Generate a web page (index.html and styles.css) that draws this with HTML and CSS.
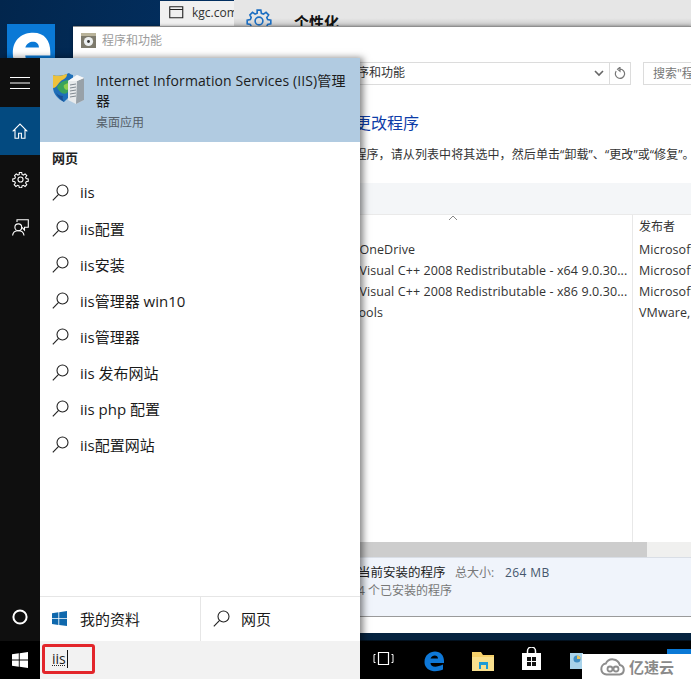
FILE: index.html
```html
<!DOCTYPE html>
<html lang="zh">
<head>
<meta charset="utf-8">
<title>iis</title>
<link rel="stylesheet" href="styles.css">
</head>
<body>
<div class="desktop">
  <div class="win-tab">
    <svg class="tab-icon" width="15" height="13" viewBox="0 0 15 13"><path d="M.75.75h13v11h-13zM.75 3.5h13" fill="none" stroke="#222" stroke-width="1.1"/></svg>
    <span>kgc.com</span>
  </div>
  <div class="win-settings">
    <svg class="gear-blue" width="26" height="26" viewBox="0 0 24 24"><path d="M10.3 2h3.4l.5 2.900 1.900.8 2.400-1.700 2.400 2.400-1.700 2.400.8 1.900 2.900.5v3.400l-2.900.5-.8 1.900 1.700 2.400-2.400 2.400-2.400-1.700-1.900.8-.5 2.900h-3.400l-.5-2.900-1.900-.8-2.400 1.700-2.400-2.400 1.700-2.400-.8-1.900-2.900-.5v-3.400l2.900-.5.8-1.900L3.600 6.400 6 4l2.400 1.700 1.900-.8z" fill="none" stroke="#1b6ec2" stroke-width="1.500"/><circle cx="12" cy="12" r="3.600" fill="none" stroke="#1b6ec2" stroke-width="1.500"/></svg>
    <b>个性化</b>
  </div>
  <div class="edge-tile">
    <svg width="50" height="50" viewBox="0 0 44 44"><path d="M6 24C6 11 15 6 24 6c10 0 15 7 15 17v3H17c0 7 10 9 21 3v9c-6 3-12 4-18 3C10 39 6 32 6 24zm11-5h12c0-7-10-7-12 0z" fill="#fff"/></svg>
  </div>

  <div class="win-cp">
    <div class="cp-title">
      <svg width="15" height="15" viewBox="0 0 15 15"><rect width="15" height="15" fill="#7d7a6c"/><rect width="15" height="3" fill="#b9b39a"/><circle cx="7.500" cy="8.500" r="4.600" fill="#eceff0"/><circle cx="7.500" cy="8.500" r="1.400" fill="#333"/></svg>
      <span>程序和功能</span>
    </div>
    <div class="cp-nav">
      <div class="addr">
        <span class="addr-text">程序和功能</span>
        <svg class="chev" width="10" height="7" viewBox="0 0 10 7"><path d="M1 1l4 4 4-4" fill="none" stroke="#666" stroke-width="1.600"/></svg>
        <span class="addr-refresh"><svg width="12" height="13" viewBox="0 0 12 13"><path d="M6 2.200a4.600 4.600 0 1 1-3.800 2M6 .2v4L3.600 2.200z" fill="none" stroke="#777" stroke-width="1.200"/></svg></span>
      </div>
      <div class="search">搜索"程序和功能"</div>
    </div>
    <h1 class="cp-h">卸载或更改程序</h1>
    <p class="cp-p">若要卸载程序，请从列表中将其选中，然后单击“卸载”、“更改”或“修复”。</p>
    <div class="toolbar"></div>
    <div class="table">
      <div class="col-name">
        <svg class="sort" width="10" height="6" viewBox="0 0 10 6"><path d="M1 5l4-4 4 4" fill="none" stroke="#888"/></svg>
        <div class="head">名称</div>
        <div class="cell">Microsoft OneDrive</div>
        <div class="cell">Microsoft Visual C++ 2008 Redistributable - x64 9.0.30...</div>
        <div class="cell">Microsoft Visual C++ 2008 Redistributable - x86 9.0.30...</div>
        <div class="cell">VMware Tools</div>
      </div>
      <div class="col-pub">
        <div class="head">发布者</div>
        <div class="cell">Microsoft Corporation</div>
        <div class="cell">Microsoft Corporation</div>
        <div class="cell">Microsoft Corporation</div>
        <div class="cell">VMware, Inc.</div>
      </div>
    </div>
    <div class="hscroll"><div class="hthumb"></div></div>
    <div class="summary">
      <div class="sum-1"><span class="sum-a">当前安装的程序</span><span class="sum-b">总大小:</span><span class="sum-c">264 MB</span></div>
      <div class="sum-2">4 个已安装的程序</div>
    </div>
  </div>

  <div class="taskbar">
    <svg class="tb-view" width="21" height="15" viewBox="0 0 21 15"><path d="M5.500 1.500h10v12h-10z" fill="none" stroke="#fff" stroke-width="1.200"/><path d="M2.500 3.500H1v8h1.500M18.500 3.500H20v8h-1.500" fill="none" stroke="#fff"/></svg>
    <svg class="tb-edge" width="22" height="22" viewBox="0 0 44 44"><path d="M3 24C3 10 14 3 24 3c11 0 18 8 18 19v4H15c0 8 11 10 25 3v10c-7 3-14 4-21 3C9 40 3 33 3 24zm12-7h15c0-8-12-8-15 0z" fill="#0e78d8"/></svg>
    <svg class="tb-folder" width="22" height="20" viewBox="0 0 22 20"><path d="M0 1h9l2 3h11v16H0z" fill="#f5d06a"/><path d="M0 6h22v14H0z" fill="#f9e08e"/><rect x="7" y="11" width="9" height="7" fill="#1e9bd7"/><rect x="9" y="14" width="5" height="4" fill="#f9e08e"/></svg>
    <svg class="tb-store" width="21" height="24" viewBox="0 0 21 24"><path d="M6.500 6V4a4 4 0 0 1 8 0v2" fill="none" stroke="#fff" stroke-width="1.500"/><path d="M1 6h19v17H1z" fill="#fff"/><path d="M6 10h4v4H6zM11 10h4v4h-4zM6 15h4v4H6zM11 15h4v4h-4z" fill="#111"/></svg>
    <svg class="tb-app" width="13" height="16" viewBox="0 0 13 16"><rect width="13" height="16" fill="#a9d3ea"/><circle cx="7" cy="6" r="3.500" fill="#3f8dc2"/><path d="M7 6V2.500A3.500 3.500 0 0 1 10.500 6z" fill="#e9c35a"/></svg>
    <div class="tb-blue"></div>
  </div>
  <div class="watermark">
    <svg width="26" height="19" viewBox="0 0 26 19"><path d="M6.500 17.500a5.500 5.500 0 0 1-.7-10.900 7.500 7.500 0 0 1 14 1.400 4.800 4.800 0 0 1-.3 9.500z" fill="none" stroke="#8d8d8d" stroke-width="2"/><circle cx="10" cy="12" r="2.500" fill="none" stroke="#8d8d8d" stroke-width="1.800"/><circle cx="16" cy="12" r="2.500" fill="none" stroke="#8d8d8d" stroke-width="1.800"/></svg>
    <span>亿速云</span>
  </div>

  <div class="start">
    <div class="rail">
      <div class="rail-top">
        <div class="rail-btn burger">
          <svg width="20" height="14" viewBox="0 0 20 14"><path d="M0 1.500h20M0 7h20M0 12.500h20" stroke="#fff" stroke-width="1.100"/></svg>
        </div>
        <div class="rail-btn home">
          <svg width="16" height="16" viewBox="0 0 16 16"><path d="M.7 8.300L8 1l7.300 7.300M3 6.500v8.800h3.600v-5h2.800v5H13V6.500" fill="none" stroke="#fff" stroke-width="1.100"/></svg>
        </div>
        <div class="rail-btn">
          <svg width="17" height="17" viewBox="0 0 24 24"><path d="M10.300 2h3.400l.5 2.900 1.900.8 2.400-1.700 2.400 2.400-1.700 2.400.8 1.900 2.900.5v3.400l-2.900.5-.8 1.900 1.700 2.400-2.400 2.400-2.400-1.700-1.900.8-.5 2.900h-3.400l-.5-2.900-1.900-.8-2.400 1.700-2.400-2.400 1.700-2.400-.8-1.900-2.900-.5v-3.400l2.900-.5.8-1.900L3.600 6.400 6 4l2.400 1.700 1.900-.8z" fill="none" stroke="#fff" stroke-width="1.500"/><circle cx="12" cy="12" r="3.600" fill="none" stroke="#fff" stroke-width="1.500"/></svg>
        </div>
        <div class="rail-btn">
          <svg width="17" height="17" viewBox="0 0 17 17"><path d="M5 3V.8h11.300v7.500h-3.800v2.700L10 8.300" fill="none" stroke="#fff" stroke-width="1.100"/><circle cx="6.300" cy="8.300" r="3.400" fill="none" stroke="#fff" stroke-width="1.100"/><path d="M.6 16.500c.3-3.500 2.500-4.800 5.700-4.800s5.400 1.300 5.700 4.800" fill="none" stroke="#fff" stroke-width="1.100"/></svg>
        </div>
      </div>
      <div class="rail-btn cortana">
        <svg width="16" height="16" viewBox="0 0 16 16"><circle cx="8" cy="8" r="6.600" fill="none" stroke="#fff" stroke-width="2"/></svg>
      </div>
      <div class="rail-btn winbtn">
        <svg width="16" height="16" viewBox="0 0 16 16"><path d="M0 2.300l6.800-1v6.300H0zM7.700 1.200L16 0v7.600H7.700zM0 8.500h6.800v6.300l-6.800-1zM7.700 8.500H16V16l-8.300-1.200z" fill="#fff"/></svg>
      </div>
    </div>
    <div class="panel">
      <div class="best">
        <svg class="best-icon" width="33" height="33" viewBox="0 0 33 33">
          <path d="M1 3c6 2 12 0 16-2 1 1 3 2 4 2v12c0 7-5 11-9 15C6 27 1 22 1 15z" fill="#1f6fb8"/>
          <path d="M1 3c6 2 10 0 14-1 0 5-5 5-8 9-2 3-4 5-6 5z" fill="#eec23b"/>
          <path d="M5 15c3-5 9-8 15-6 1 5-2 8-5 12-4 2-8-1-10-6z" fill="#3aa35c"/>
          <path d="M12 13c3-2 5-2 7-1 0 3-2 5-4 6-2 0-4-3-3-5z" fill="#8fce4d"/>
          <path d="M4 21c2 2 4 3 7 3-1 2 0 4 1 6-3-2-6-5-8-9z" fill="#1b4f94"/>
          <path d="M16 9l9-6 7 3v22l-8 4-8-4z" fill="#e7eaec"/>
          <path d="M25 9l7-3v22l-8 4z" fill="#98a1a8"/>
          <path d="M16 9l9-6 7 3-7 3z" fill="#f7f8f9"/>
          <path d="M18 13l6-1M18 16l6-1M18 19l6-1M18 22l6-1M18 25l6-1" stroke="#7f8890"/>
        </svg>
        <div class="best-text">
          <div class="best-title">Internet Information Services (IIS)管理器</div>
          <div class="best-sub">桌面应用</div>
        </div>
      </div>
      <div class="section">网页</div>
      <ul class="results">
        <li><svg class="mag" width="17" height="17" viewBox="0 0 17 17"><circle cx="10.500" cy="6.500" r="5.500" fill="none" stroke="#222" stroke-width="1.100"/><path d="M6.600 10.400L.8 16.300" stroke="#222" stroke-width="1.100"/></svg><span>iis</span></li>
        <li><svg class="mag" width="17" height="17" viewBox="0 0 17 17"><circle cx="10.500" cy="6.500" r="5.500" fill="none" stroke="#222" stroke-width="1.100"/><path d="M6.600 10.400L.8 16.300" stroke="#222" stroke-width="1.100"/></svg><span>iis配置</span></li>
        <li><svg class="mag" width="17" height="17" viewBox="0 0 17 17"><circle cx="10.500" cy="6.500" r="5.500" fill="none" stroke="#222" stroke-width="1.100"/><path d="M6.600 10.400L.8 16.300" stroke="#222" stroke-width="1.100"/></svg><span>iis安装</span></li>
        <li><svg class="mag" width="17" height="17" viewBox="0 0 17 17"><circle cx="10.500" cy="6.500" r="5.500" fill="none" stroke="#222" stroke-width="1.100"/><path d="M6.600 10.400L.8 16.300" stroke="#222" stroke-width="1.100"/></svg><span>iis管理器 win10</span></li>
        <li><svg class="mag" width="17" height="17" viewBox="0 0 17 17"><circle cx="10.500" cy="6.500" r="5.500" fill="none" stroke="#222" stroke-width="1.100"/><path d="M6.600 10.400L.8 16.300" stroke="#222" stroke-width="1.100"/></svg><span>iis管理器</span></li>
        <li><svg class="mag" width="17" height="17" viewBox="0 0 17 17"><circle cx="10.500" cy="6.500" r="5.500" fill="none" stroke="#222" stroke-width="1.100"/><path d="M6.600 10.400L.8 16.300" stroke="#222" stroke-width="1.100"/></svg><span>iis 发布网站</span></li>
        <li><svg class="mag" width="17" height="17" viewBox="0 0 17 17"><circle cx="10.500" cy="6.500" r="5.500" fill="none" stroke="#222" stroke-width="1.100"/><path d="M6.600 10.400L.8 16.300" stroke="#222" stroke-width="1.100"/></svg><span>iis php 配置</span></li>
        <li><svg class="mag" width="17" height="17" viewBox="0 0 17 17"><circle cx="10.500" cy="6.500" r="5.500" fill="none" stroke="#222" stroke-width="1.100"/><path d="M6.600 10.400L.8 16.300" stroke="#222" stroke-width="1.100"/></svg><span>iis配置网站</span></li>
      </ul>
      <div class="scopes">
        <div class="scope mine">
          <svg width="15" height="15" viewBox="0 0 16 16"><path d="M0 2.300l6.800-1v6.300H0zM7.700 1.200L16 0v7.600H7.700zM0 8.500h6.800v6.300l-6.800-1zM7.700 8.500H16V16l-8.300-1.200z" fill="#0f68ad"/></svg>
          <span>我的资料</span>
        </div>
        <div class="scope web">
          <svg width="17" height="17" viewBox="0 0 17 17"><circle cx="10.500" cy="6.500" r="5.500" fill="none" stroke="#222" stroke-width="1.100"/><path d="M6.600 10.400L.8 16.300" stroke="#222" stroke-width="1.100"/></svg>
          <span>网页</span>
        </div>
      </div>
      <div class="searchbar">
        <div class="query"><span class="q">iis</span><i class="caret"></i></div>
      </div>
    </div>
  </div>
</div>
</body>
</html>
```

FILE: styles.css
```css
* { box-sizing: border-box; }
html, body { margin: 0; padding: 0; }
.desktop {
  position: relative;
  width: 691px;
  height: 679px;
  overflow: hidden;
  background: linear-gradient(100deg, #02264d 0%, #03346a 40%, #04274f 100%);
  font-family: "Open Sans", "Noto Sans CJK SC", sans-serif;
  color: #1a1a1a;
}
.win-tab {
  position: absolute; left: 160px; top: 1px; width: 74px; height: 25px;
  background: #f0f0f0;
  font-size: 12px; color: #333;
  display: flex; align-items: center; gap: 8px;
  padding: 0 0 3px 9px; overflow: hidden; white-space: nowrap;
}
.tab-icon { flex: none; }
.win-settings {
  position: absolute; left: 234px; top: 0; width: 457px; height: 26px;
  background: linear-gradient(#e6e6e6 0%, #e6e6e6 70%, #c9c9c9 100%);
  overflow: hidden;
}
.gear-blue { position: absolute; left: 12px; top: 8px; }
.win-settings b { position: absolute; left: 60px; top: 11px; font-size: 15px; line-height: 22px; color: #111; }
.edge-tile {
  position: absolute; left: 7px; top: 24px; width: 48px; height: 36px;
  background: #0a79d6; overflow: hidden;
  display: flex; justify-content: center; padding-top: 2px;
}
.edge-tile svg { flex: none; }
.win-cp {
  position: absolute; left: 73px; top: 26px; width: 618px; height: 607px;
  background: #fff; border-top: 1px solid #8f8f8f;
  display: flex; flex-direction: column;
  box-shadow: 0 0 3px rgba(0,0,0,.4);
}
.cp-title {
  height: 26px; flex: none; display: flex; align-items: center; gap: 6px; padding-left: 8px;
  font-size: 12px; color: #9c9c9c;
}
.cp-nav { height: 34px; flex: none; margin-top: 9px; display: flex; padding-left: 210px; }
.addr {
  width: 348px; height: 23px; flex: none;
  border: 1px solid #dcdcdc; display: flex; align-items: center;
  font-size: 12px; color: #333;
  padding-left: 61px;
}
.addr-text { flex: 1; line-height: 19px; padding-bottom: 2px; }
.chev { margin-right: 5px; }
.addr-refresh {
  width: 21px; height: 21px; border-left: 1px solid #dcdcdc;
  display: flex; align-items: center; justify-content: center;
}
.search {
  margin-left: 12px; width: 120px; height: 23px; flex: none; border: 1px solid #dcdcdc;
  font-size: 12px; color: #777; line-height: 21px; padding-left: 9px; white-space: nowrap;
}
.cp-h { margin: 15px 0 0 234px; font-size: 16px; line-height: 24px; font-weight: 400; color: #0d3ca8; flex: none; }
.cp-p { margin: 11px 0 0 233px; font-size: 12px; line-height: 18px; letter-spacing: .1px; color: #333; white-space: nowrap; flex: none; }
.toolbar { height: 31px; margin-top: 19px; background: #f4f6f8; flex: none; }
.table { flex: 1; display: flex; min-height: 0; font-size: 12.5px; color: #333; border-top: 1px solid #eaeaea; }
.col-name { width: 560px; flex: none; padding-left: 227px; position: relative; border-right: 1px solid #e8e8e8; white-space: nowrap; overflow: hidden; }
.sort { position: absolute; left: 375px; top: 0; }
.col-pub { padding: 0 0 0 6px; white-space: nowrap; overflow: hidden; }
.head { height: 24px; line-height: 24px; font-size: 12px; }
.cell { height: 21px; line-height: 21px; letter-spacing: .1px; }
.hscroll { height: 15px; flex: none; background: #f0f0ef; }
.hthumb { width: 574px; height: 100%; background: #cdcdcd; }
.summary {
  height: 60px; flex: none; background: #f0f4fb; border-top: 1px solid #d9dee6;
  border-bottom: 1px solid #9a9a9a; padding: 6px 0 0 254px; margin-bottom: 16px;
  font-size: 12px; color: #333;
}
.sum-1 { line-height: 18px; display: flex; white-space: nowrap; }
.sum-a { width: 97px; margin-left: 31px; color: #222; font-size: 12.5px; }
.sum-b { color: #777; width: 50px; }
.sum-c { color: #44566c; letter-spacing: .4px; }
.sum-2 { line-height: 18px; color: #777; margin-left: 31px; }
.taskbar {
  position: absolute; left: 360px; top: 633px; right: 0; height: 46px;
  background: linear-gradient(#05233f 0, #05233f 7px, #000 8px);
}
.taskbar svg { position: absolute; }
.tb-view { left: 13px; top: 18px; }
.tb-edge { left: 63px; top: 17px; }
.tb-folder { left: 112px; top: 18px; }
.tb-store { left: 161px; top: 14px; }
.tb-app { left: 210px; top: 20px; }
.tb-blue { position: absolute; left: 307px; top: 16px; right: 0; height: 6px; background: #0a79d6; }
.watermark {
  position: absolute; left: 582px; top: 654px; width: 109px; height: 25px; background: #fff;
  display: flex; align-items: center; gap: 3px; padding-left: 18px;
  font-size: 15px; color: #8a8a8a; font-weight: 700; white-space: nowrap;
}
.watermark svg { flex: none; }
.start {
  position: absolute; left: 0; top: 58px; width: 360px; height: 621px;
  display: flex; box-shadow: 3px 0 7px rgba(0,0,0,.5);
}
.rail { width: 40px; flex: none; background: #0f0f0f; display: flex; flex-direction: column; }
.rail-top { flex: 1; }
.rail-btn { height: 48px; display: flex; align-items: center; justify-content: center; }
.burger { height: 49px; }
.home { background: #034a80; }
.winbtn { height: 38px; background: #000; }
.panel { flex: 1; min-width: 0; background: #fff; display: flex; flex-direction: column; }
.best {
  height: 84px; flex: none; background: #b1cbe1; position: relative; padding: 13px 12px 0 56px;
}
.best-icon { position: absolute; left: 12px; top: 14px; }
.best-title { font-size: 14px; line-height: 20px; color: #1c1c1c; letter-spacing: .1px; }
.best-sub { font-size: 12px; line-height: 20px; color: #555f69; margin-top: 2px; }
.section { height: 32px; flex: none; padding: 7px 0 0 12px; font-size: 13px; line-height: 18px; font-weight: 700; color: #222; }
.results { list-style: none; margin: 0; padding: 0; flex: 1; }
.results li { height: 36px; display: flex; align-items: center; gap: 11px; padding-left: 12px; font-size: 15px; color: #1a1a1a; white-space: nowrap; }
.mag { flex: none; }
.scopes { height: 45px; flex: none; display: flex; border-top: 1px solid #e6e6e6; font-size: 15px; color: #1a1a1a; padding-bottom: 0; }
.scope { display: flex; align-items: center; padding-bottom: 2px; }
.mine { width: 161px; padding-left: 12px; gap: 13px; border-right: 1px solid #e6e6e6; }
.web { padding-left: 12px; gap: 11px; }
.searchbar { height: 38px; flex: none; background: #f2f2f2; padding: 3px 0 0 2px; }
.query {
  width: 53px; height: 30px; border: 3px solid #e3262b; border-radius: 3px;
  display: flex; align-items: center; padding-left: 7px;
  font-size: 14px; color: #222;
}
.q { line-height: 18px; text-decoration: underline dotted 1px; }
.caret { display: block; width: 1px; height: 18px; background: #111; margin-left: 1px; }
```
